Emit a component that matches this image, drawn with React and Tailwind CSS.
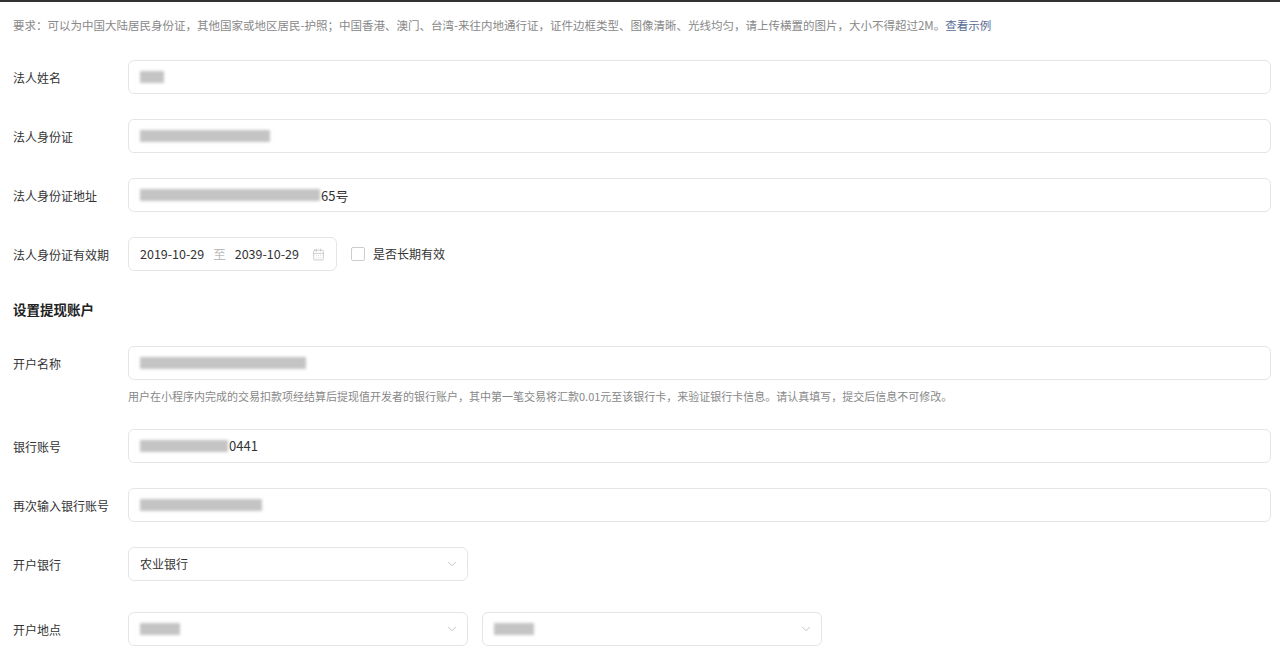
import { ChevronDown, CalendarDays } from 'lucide-react';

const FONT = { fontFamily: '"Microsoft YaHei", "Noto Sans CJK SC", sans-serif' };

function Blur({ w, extra }) {
  return (
    <span className="flex items-center gap-0">
      <span className={`h-[12px] bg-[#c4c4c4] blur-[1.5px] ${w}`} />
      {extra && <span className="ml-[1px] text-[13px] text-[#333]">{extra}</span>}
    </span>
  );
}

function Row({ label, children, mt = 'mt-[25px]' }) {
  return (
    <div className={`flex items-start ${mt}`}>
      <div className="w-[128px] shrink-0 pl-[13px] pt-[9px] text-[12px] text-[#333]">{label}</div>
      <div className="flex-1 pr-[9px]">{children}</div>
    </div>
  );
}

function Input({ children }) {
  return (
    <div className="flex h-[34px] items-center rounded-[6px] border border-[#e5e5e5] bg-white px-[11px]">
      {children}
    </div>
  );
}

function Select({ children }) {
  return (
    <div className="flex h-[34px] w-[340px] items-center justify-between rounded-[6px] border border-[#e5e5e5] bg-white pl-[11px] pr-[8px] text-[12px] text-[#333]">
      {children}
      <ChevronDown className="h-[14px] w-[14px] text-[#bbb]" strokeWidth={1.5} />
    </div>
  );
}

export default function App() {
  return (
    <div className="min-h-[671px] border-t-2 border-[#333] bg-white" style={FONT}>
      <div className="pl-[13px] pt-[15px] text-[11.5px] text-[#888]">
        要求：可以为中国大陆居民身份证，其他国家或地区居民-护照；中国香港、澳门、台湾-来往内地通行证，证件边框类型、图像清晰、光线均匀，请上传横置的图片，大小不得超过2M。
        <span className="text-[#576b95]">查看示例</span>
      </div>

      <Row label="法人姓名" mt="mt-[26px]">
        <Input><Blur w="w-[24px]" /></Input>
      </Row>
      <Row label="法人身份证">
        <Input><Blur w="w-[130px]" /></Input>
      </Row>
      <Row label="法人身份证地址">
        <Input><Blur w="w-[180px]" extra="65号" /></Input>
      </Row>
      <Row label="法人身份证有效期">
        <div className="flex items-center">
          <div className="flex h-[34px] w-[209px] items-center rounded-[6px] border border-[#e5e5e5] px-[11px] text-[12.5px] text-[#333]">
            <span>2019-10-29</span>
            <span className="mx-[9px] text-[#bbb]">至</span>
            <span>2039-10-29</span>
            <CalendarDays className="ml-auto h-[13px] w-[13px] text-[#bbb]" strokeWidth={1.3} />
          </div>
          <div className="ml-[14px] h-[14px] w-[14px] rounded-[2px] border border-[#ccc]" />
          <span className="ml-[8px] text-[12px] text-[#333]">是否长期有效</span>
        </div>
      </Row>

      <div className="mt-[28px] pl-[13px] text-[13.5px] font-bold text-[#222]">设置提现账户</div>

      <Row label="开户名称" mt="mt-[26px]">
        <Input><Blur w="w-[166px]" /></Input>
        <div className="mt-[8px] text-[11px] text-[#888]">
          用户在小程序内完成的交易扣款项经结算后提现值开发者的银行账户，其中第一笔交易将汇款0.01元至该银行卡，来验证银行卡信息。请认真填写，提交后信息不可修改。
        </div>
      </Row>
      <Row label="银行账号" mt="mt-[25px]">
        <Input><Blur w="w-[88px]" extra="0441" /></Input>
      </Row>
      <Row label="再次输入银行账号">
        <Input><Blur w="w-[122px]" /></Input>
      </Row>
      <Row label="开户银行">
        <Select>农业银行</Select>
      </Row>
      <Row label="开户地点" mt="mt-[31px]">
        <div className="flex gap-[14px]">
          <Select><Blur w="w-[40px]" /></Select>
          <Select><Blur w="w-[40px]" /></Select>
        </div>
      </Row>
    </div>
  );
}
